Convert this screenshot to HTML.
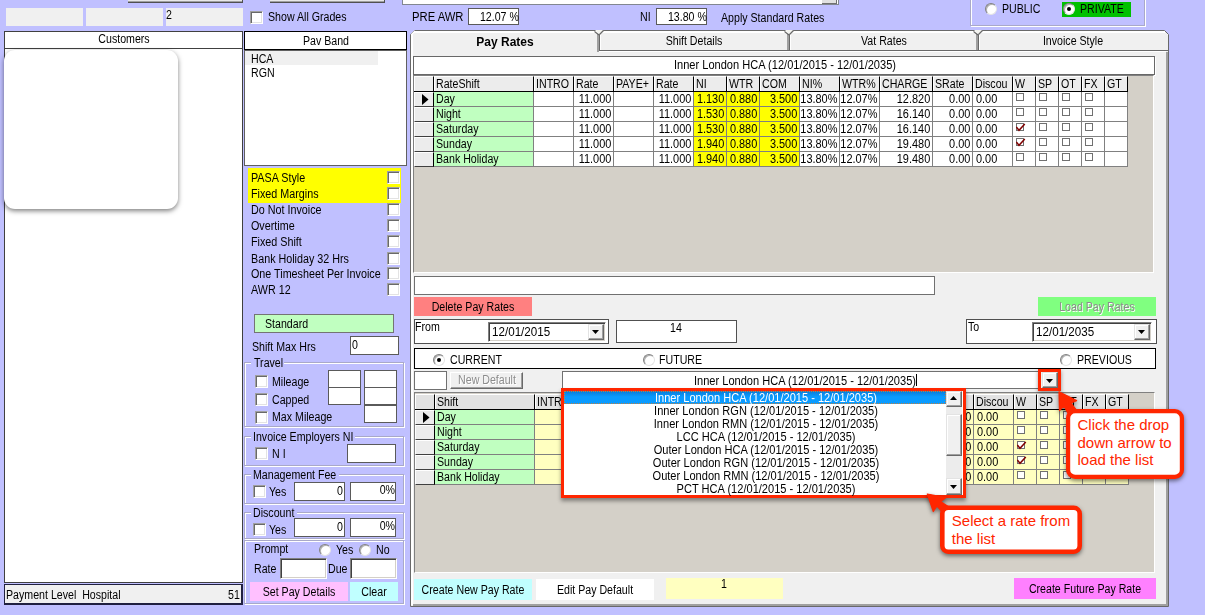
<!DOCTYPE html>
<html><head><meta charset="utf-8"><title>Pay Rates</title><style>
html,body{margin:0;padding:0;}
body{width:1205px;height:615px;overflow:hidden;background:#c0c0ff;position:relative;font-family:"Liberation Sans",sans-serif;font-size:12.5px;color:#000;}
.a{position:absolute;}
.t{white-space:nowrap;line-height:14px;height:14px;transform:scaleX(.85);}
.tl{transform-origin:0 50%;}
.tr{transform-origin:100% 50%;text-align:right;}
.tc{transform-origin:50% 50%;text-align:center;}
.ct{font-size:15px;line-height:18px;color:#ff2600;white-space:nowrap;}
.dis{color:#8c8c8c;text-shadow:1px 1px 0 #fff;}
.cb{width:13px;height:13px;box-sizing:border-box;background:#fff;border:1px solid;border-color:#a0a0a0 #fff #fff #a0a0a0;box-shadow:inset 1px 1px 0 #696969, inset -1px -1px 0 #e3e3e3;}
.gcb{width:8px;height:8px;box-sizing:border-box;background:#fff;border:1px solid #707070;}
.rd{width:12px;height:12px;box-sizing:border-box;border-radius:50%;background:#fff;border:1px solid;border-color:#808080 #e4e4e4 #e4e4e4 #808080;box-shadow:inset 1px 1px 0 #b0b0b0;}
.rd i{position:absolute;left:3px;top:3px;width:4px;height:4px;border-radius:50%;background:#000;}
.tb{background:#fff;box-sizing:border-box;border:1px solid #5a5a5a;}
.sunk{background:#fff;box-sizing:border-box;border:1px solid;border-color:#808080 #fff #fff #808080;box-shadow:inset 1px 1px 0 #404040, inset -1px -1px 0 #d4d0c8;}
.frame{box-sizing:border-box;border:1px solid #a9a9c9;box-shadow:1px 1px 0 #fff, inset 1px 1px 0 #fff;}
.btnbot{background:#e8e8e8;border-bottom:1px solid #505050;border-right:1px solid #505050;box-sizing:border-box;box-shadow:inset 0 -1px 0 #a0a0a0;}
.btn{background:#f0f0f0;box-sizing:border-box;border:1px solid;border-color:#fff #696969 #696969 #fff;box-shadow:inset -1px -1px 0 #a0a0a0;}
.ddb{background:#f0f0f0;box-sizing:border-box;border:1px solid;border-color:#e3e3e3 #696969 #696969 #e3e3e3;box-shadow:inset -1px -1px 0 #a0a0a0, inset 1px 1px 0 #fff;}
.gh{background:#ececec;box-sizing:border-box;border:1px solid;border-color:#fff #000 #404040 #fff;}
.gh2{background:#e2e2e2;}
.gc{box-sizing:border-box;border-right:1px solid #808080;border-bottom:1px solid #808080;}
</style></head><body>
<div class="a btnbot" style="left:128px;top:0px;width:115px;height:3px;"></div>
<div class="a btnbot" style="left:270px;top:0px;width:115px;height:3px;"></div>
<div class="a " style="left:402px;top:0px;width:437px;height:5px;background:#fff;border:1px solid #828790;border-top:0;box-sizing:border-box;"></div>
<div class="a " style="left:822px;top:0px;width:15px;height:4px;background:#e1e1e1;border-right:1px solid #707070;border-bottom:1px solid #707070;box-sizing:border-box;"></div>
<div class="a " style="left:6px;top:8px;width:77px;height:18px;background:#f0f0f0;"></div>
<div class="a " style="left:86px;top:8px;width:77px;height:18px;background:#f0f0f0;"></div>
<div class="a " style="left:166px;top:8px;width:77px;height:18px;background:#f0f0f0;"></div>
<div class="a t tl " style="left:166.2px;top:8.0px;">2</div>
<div class="a cb" style="left:250px;top:11px"></div>
<div class="a t tl " style="left:268.2px;top:10.4px;">Show All Grades</div>
<div class="a t tl " style="left:412.2px;top:10.4px;transform:scaleX(0.9);">PRE AWR</div>
<div class="a tb" style="left:468px;top:8px;width:51px;height:17px;"></div>
<div class="a t tr " style="right:686.5px;top:10.4px;">12.07 %</div>
<div class="a t tl " style="left:640.2px;top:10.4px;">NI</div>
<div class="a tb" style="left:656px;top:8px;width:51px;height:17px;"></div>
<div class="a t tr " style="right:498.5px;top:10.4px;">13.80 %</div>
<div class="a t tl " style="left:721.0px;top:11.4px;">Apply Standard Rates</div>
<div class="a frame" style="left:970px;top:-4px;width:175px;height:30px;"></div>
<div class="a rd" style="left:985px;top:3px"></div>
<div class="a t tl " style="left:1001.7px;top:2.4px;">PUBLIC</div>
<div class="a " style="left:1062px;top:2px;width:69px;height:15px;background:#00c000;"></div>
<div class="a rd" style="left:1063px;top:3px"><i></i></div>
<div class="a t tl " style="left:1079.7px;top:2.4px;">PRIVATE</div>
<div class="a " style="left:4px;top:31px;width:239px;height:18px;background:#fff;border:1px solid #404040;box-sizing:border-box;"></div>
<div class="a t tc " style="left:-76px;width:400px;top:32.4px;">Customers</div>
<div class="a " style="left:4px;top:48px;width:239px;height:535px;background:#fff;border:1px solid #404040;box-sizing:border-box;"></div>
<div class="a " style="left:4px;top:50px;width:174px;height:159px;background:#fff;border-radius:11px;box-shadow:0 2px 5px rgba(0,0,0,.5);"></div>
<div class="a " style="left:4px;top:584px;width:239px;height:21px;background:#f0f0f0;border:1px solid #202040;border-width:1px 2px 2px 1px;box-sizing:border-box;"></div>
<div class="a t tl " style="left:6.2px;top:588.4px;">Payment Level&nbsp; Hospital</div>
<div class="a t tr " style="right:965px;top:588.4px;">51</div>
<div class="a " style="left:244px;top:31px;width:163px;height:19px;background:#fff;border:1px solid #000;box-sizing:border-box;"></div>
<div class="a t tc " style="left:126px;width:400px;top:34.4px;">Pav Band</div>
<div class="a " style="left:244px;top:50px;width:163px;height:116px;background:#fff;border:1px solid #606060;box-sizing:border-box;"></div>
<div class="a " style="left:245px;top:51px;width:133px;height:14px;background:#f0f0f0;"></div>
<div class="a t tl " style="left:251.4px;top:52.4px;">HCA</div>
<div class="a t tl " style="left:251.4px;top:66.4px;">RGN</div>
<div class="a " style="left:248px;top:168px;width:153px;height:35px;background:#ffff00;"></div>
<div class="a t tl " style="left:251.4px;top:171.1px;transform:scaleX(0.86);">PASA Style</div>
<div class="a cb" style="left:387px;top:171px"></div>
<div class="a t tl " style="left:251.4px;top:187.1px;transform:scaleX(0.86);">Fixed Margins</div>
<div class="a cb" style="left:387px;top:187px"></div>
<div class="a t tl " style="left:251.4px;top:203.1px;transform:scaleX(0.86);">Do Not Invoice</div>
<div class="a cb" style="left:387px;top:203px"></div>
<div class="a t tl " style="left:251.4px;top:219.1px;transform:scaleX(0.86);">Overtime</div>
<div class="a cb" style="left:387px;top:219px"></div>
<div class="a t tl " style="left:251.4px;top:235.1px;transform:scaleX(0.86);">Fixed Shift</div>
<div class="a cb" style="left:387px;top:235px"></div>
<div class="a t tl " style="left:251.4px;top:252.1px;transform:scaleX(0.86);">Bank Holiday 32 Hrs</div>
<div class="a cb" style="left:387px;top:252px"></div>
<div class="a t tl " style="left:251.4px;top:267.1px;transform:scaleX(0.86);">One Timesheet Per Invoice</div>
<div class="a cb" style="left:387px;top:267px"></div>
<div class="a t tl " style="left:251.4px;top:283.1px;transform:scaleX(0.86);">AWR 12</div>
<div class="a cb" style="left:387px;top:283px"></div>
<div class="a " style="left:254px;top:314px;width:140px;height:19px;background:#c0ffc0;border:1px solid #747474;box-sizing:border-box;"></div>
<div class="a t tl " style="left:264.7px;top:316.9px;">Standard</div>
<div class="a t tl " style="left:251.7px;top:339.9px;">Shift Max Hrs</div>
<div class="a tb" style="left:350px;top:336px;width:49px;height:19px;"></div>
<div class="a t tl " style="left:352.2px;top:337.9px;">0</div>
<div class="a frame" style="left:244px;top:362px;width:160px;height:65px;"></div>
<div class="a " style="left:251px;top:356px;width:33px;height:12px;background:#c0c0ff;"></div>
<div class="a t tl " style="left:254.0px;top:355.9px;">Travel</div>
<div class="a cb" style="left:255px;top:375px"></div>
<div class="a t tl " style="left:271.7px;top:374.9px;">Mileage</div>
<div class="a cb" style="left:255px;top:393px"></div>
<div class="a t tl " style="left:271.7px;top:392.6px;">Capped</div>
<div class="a cb" style="left:255px;top:411px"></div>
<div class="a t tl " style="left:271.7px;top:410.3px;">Max Mileage</div>
<div class="a tb" style="left:328px;top:370px;width:33px;height:18px;"></div>
<div class="a tb" style="left:328px;top:387px;width:33px;height:18px;"></div>
<div class="a tb" style="left:364px;top:370px;width:33px;height:18px;"></div>
<div class="a tb" style="left:364px;top:387px;width:33px;height:18px;"></div>
<div class="a tb" style="left:364px;top:405px;width:33px;height:18px;"></div>
<div class="a frame" style="left:244px;top:436px;width:160px;height:30px;"></div>
<div class="a " style="left:251px;top:430px;width:104px;height:12px;background:#c0c0ff;"></div>
<div class="a t tl " style="left:253.0px;top:429.9px;">Invoice Employers NI</div>
<div class="a cb" style="left:255px;top:447px"></div>
<div class="a t tl " style="left:271.7px;top:446.9px;">N I</div>
<div class="a tb" style="left:347px;top:444px;width:49px;height:19px;"></div>
<div class="a frame" style="left:244px;top:474px;width:160px;height:30px;"></div>
<div class="a " style="left:251px;top:468px;width:88px;height:12px;background:#c0c0ff;"></div>
<div class="a t tl " style="left:253.0px;top:467.9px;">Management Fee</div>
<div class="a cb" style="left:253px;top:485px"></div>
<div class="a t tl " style="left:269.2px;top:484.9px;">Yes</div>
<div class="a tb" style="left:294px;top:482px;width:51px;height:19px;"></div>
<div class="a t tr " style="right:862px;top:484.4px;">0</div>
<div class="a tb" style="left:350px;top:482px;width:46px;height:19px;"></div>
<div class="a t tr " style="right:810px;top:483.4px;">0%</div>
<div class="a frame" style="left:244px;top:512px;width:160px;height:27px;"></div>
<div class="a " style="left:251px;top:506px;width:46px;height:12px;background:#c0c0ff;"></div>
<div class="a t tl " style="left:253.0px;top:505.9px;">Discount</div>
<div class="a cb" style="left:253px;top:523px"></div>
<div class="a t tl " style="left:269.2px;top:522.9px;">Yes</div>
<div class="a tb" style="left:294px;top:518px;width:51px;height:19px;"></div>
<div class="a t tr " style="right:862px;top:520.4px;">0</div>
<div class="a tb" style="left:350px;top:518px;width:46px;height:19px;"></div>
<div class="a t tr " style="right:810px;top:519.4px;">0%</div>
<div class="a frame" style="left:244px;top:540px;width:160px;height:64px;"></div>
<div class="a t tl " style="left:253.7px;top:542.2px;">Prompt</div>
<div class="a rd" style="left:319px;top:544px"></div>
<div class="a t tl " style="left:335.7px;top:543.2px;">Yes</div>
<div class="a rd" style="left:359px;top:544px"></div>
<div class="a t tl " style="left:375.9px;top:543.2px;">No</div>
<div class="a t tl " style="left:253.7px;top:561.9px;">Rate</div>
<div class="a sunk" style="left:280px;top:558px;width:47px;height:21px;"></div>
<div class="a t tl " style="left:327.7px;top:561.9px;">Due</div>
<div class="a sunk" style="left:350px;top:558px;width:47px;height:21px;"></div>
<div class="a " style="left:250px;top:582px;width:98px;height:19px;background:#ffc0ff;"></div>
<div class="a t tc " style="left:99px;width:400px;top:584.9px;">Set Pay Details</div>
<div class="a " style="left:350px;top:582px;width:48px;height:19px;background:#c0ffff;"></div>
<div class="a t tc " style="left:174px;width:400px;top:584.9px;">Clear</div>
<svg class="a" style="left:0;top:0" width="1205" height="615" shape-rendering="crispEdges"><path d="M410.5 34.5 L414.5 30.5 H1164.5 L1168.5 34.5 V606.5 H410.5 Z" fill="#f0f0f0" stroke="#696969" shape-rendering="auto"/><path d="M414 32 H1165" stroke="#fff" stroke-width="2"/><path d="M412 34 V605" stroke="#fff" stroke-width="2"/><path d="M411.5 34.5 L415 31" stroke="#fff" stroke-width="1.5" shape-rendering="auto"/><path d="M1167 52 V606" stroke="#a0a0a0" stroke-width="2"/><path d="M413 605 H1168" stroke="#a0a0a0" stroke-width="2"/><path d="M598 34 V52" stroke="#a0a0a0" stroke-width="2"/><path d="M599.5 34 V51" stroke="#696969" stroke-width="1"/><path d="M600 52 V34 " stroke="#fff" stroke-width="1"/><path d="M595 30 L599.5 34.5 L603.5 30 Z" fill="#f4f4f0" stroke="none" shape-rendering="auto"/><path d="M594.5 31.5 L599 35 M599.5 34.5 L603.5 30.5" fill="none" stroke="#696969" stroke-width="1.2" shape-rendering="auto"/><path d="M788 34 V52" stroke="#a0a0a0" stroke-width="2"/><path d="M789.5 34 V51" stroke="#696969" stroke-width="1"/><path d="M790 52 V34 " stroke="#fff" stroke-width="1"/><path d="M785 30 L789.5 34.5 L793.5 30 Z" fill="#f4f4f0" stroke="none" shape-rendering="auto"/><path d="M784.5 31.5 L789 35 M789.5 34.5 L793.5 30.5" fill="none" stroke="#696969" stroke-width="1.2" shape-rendering="auto"/><path d="M977 34 V52" stroke="#a0a0a0" stroke-width="2"/><path d="M978.5 34 V51" stroke="#696969" stroke-width="1"/><path d="M979 52 V34 " stroke="#fff" stroke-width="1"/><path d="M974 30 L978.5 34.5 L982.5 30 Z" fill="#f4f4f0" stroke="none" shape-rendering="auto"/><path d="M973.5 31.5 L978 35 M978.5 34.5 L982.5 30.5" fill="none" stroke="#696969" stroke-width="1.2" shape-rendering="auto"/><path d="M599 50.5 H1168" stroke="#696969" stroke-width="1"/><path d="M599 51.5 H1166" stroke="#fff" stroke-width="1"/></svg>
<div class="a t tc " style="left:305.0px;width:400px;top:35.4px;font-weight:bold;transform:scaleX(0.96);">Pay Rates</div>
<div class="a t tc " style="left:494.0px;width:400px;top:34.4px;">Shift Details</div>
<div class="a t tc " style="left:683.5px;width:400px;top:34.4px;">Vat Rates</div>
<div class="a t tc " style="left:873.0px;width:400px;top:34.4px;">Invoice Style</div>
<div class="a " style="left:413px;top:56px;width:742px;height:19px;background:#fff;border:1px solid #686868;box-sizing:border-box;box-shadow:1px 1px 0 #fff;"></div>
<div class="a t tc " style="left:584.5px;width:400px;top:58.4px;transform:scaleX(0.885);">Inner London HCA (12/01/2015 - 12/01/2035)</div>
<div class="a " style="left:413px;top:75px;width:741px;height:198px;background:#d4d0c8;border:1px solid #808080;border-right-color:#fff;border-bottom-color:#fff;box-sizing:border-box;"></div>
<div class="a gh" style="left:414px;top:76px;width:20px;height:16px;"></div>
<div class="a gh" style="left:434px;top:76px;width:100px;height:16px;"></div>
<div class="a t tl " style="left:435.9px;top:77.1px;">RateShift</div>
<div class="a gh" style="left:534px;top:76px;width:40px;height:16px;"></div>
<div class="a t tl " style="left:535.9px;top:77.1px;">INTRO</div>
<div class="a gh" style="left:574px;top:76px;width:40px;height:16px;"></div>
<div class="a t tl " style="left:575.9px;top:77.1px;">Rate</div>
<div class="a gh" style="left:614px;top:76px;width:40px;height:16px;"></div>
<div class="a t tl " style="left:615.9px;top:77.1px;">PAYE+</div>
<div class="a gh" style="left:654px;top:76px;width:40px;height:16px;"></div>
<div class="a t tl " style="left:655.9px;top:77.1px;">Rate</div>
<div class="a gh" style="left:694px;top:76px;width:33px;height:16px;"></div>
<div class="a t tl " style="left:695.9px;top:77.1px;">NI</div>
<div class="a gh" style="left:727px;top:76px;width:33px;height:16px;"></div>
<div class="a t tl " style="left:728.9px;top:77.1px;">WTR</div>
<div class="a gh" style="left:760px;top:76px;width:40px;height:16px;"></div>
<div class="a t tl " style="left:761.9px;top:77.1px;">COM</div>
<div class="a gh" style="left:800px;top:76px;width:40px;height:16px;"></div>
<div class="a t tl " style="left:801.9px;top:77.1px;">NI%</div>
<div class="a gh" style="left:840px;top:76px;width:40px;height:16px;"></div>
<div class="a t tl " style="left:841.9px;top:77.1px;">WTR%</div>
<div class="a gh" style="left:880px;top:76px;width:53px;height:16px;"></div>
<div class="a t tl " style="left:881.9px;top:77.1px;">CHARGE</div>
<div class="a gh" style="left:933px;top:76px;width:40px;height:16px;"></div>
<div class="a t tl " style="left:934.9px;top:77.1px;">SRate</div>
<div class="a gh" style="left:973px;top:76px;width:40px;height:16px;"></div>
<div class="a t tl " style="left:974.9px;top:77.1px;">Discou</div>
<div class="a gh" style="left:1013px;top:76px;width:23px;height:16px;"></div>
<div class="a t tl " style="left:1014.9px;top:77.1px;">W</div>
<div class="a gh" style="left:1036px;top:76px;width:23px;height:16px;"></div>
<div class="a t tl " style="left:1037.9px;top:77.1px;">SP</div>
<div class="a gh" style="left:1059px;top:76px;width:23px;height:16px;"></div>
<div class="a t tl " style="left:1060.9px;top:77.1px;">OT</div>
<div class="a gh" style="left:1082px;top:76px;width:23px;height:16px;"></div>
<div class="a t tl " style="left:1083.9px;top:77.1px;">FX</div>
<div class="a gh" style="left:1105px;top:76px;width:23px;height:16px;"></div>
<div class="a t tl " style="left:1106.9px;top:77.1px;">GT</div>
<div class="a " style="left:414px;top:91px;width:714px;height:1px;background:#000;"></div>
<div class="a gh" style="left:414px;top:92px;width:20px;height:15px;"></div>
<svg class="a" style="left:422px;top:94px" width="8" height="11"><path d="M0 0 L6.5 5.5 L0 11 Z" fill="#000"/></svg>
<div class="a gc" style="left:434px;top:92px;width:100px;height:15px;background:#c0ffc0;"></div>
<div class="a gc" style="left:534px;top:92px;width:40px;height:15px;background:#fff;"></div>
<div class="a gc" style="left:574px;top:92px;width:40px;height:15px;background:#fff;"></div>
<div class="a gc" style="left:614px;top:92px;width:40px;height:15px;background:#fff;"></div>
<div class="a gc" style="left:654px;top:92px;width:40px;height:15px;background:#fff;"></div>
<div class="a gc" style="left:694px;top:92px;width:33px;height:15px;background:#ffff00;"></div>
<div class="a gc" style="left:727px;top:92px;width:33px;height:15px;background:#ffff00;"></div>
<div class="a gc" style="left:760px;top:92px;width:40px;height:15px;background:#ffff00;"></div>
<div class="a gc" style="left:800px;top:92px;width:40px;height:15px;background:#fff;"></div>
<div class="a gc" style="left:840px;top:92px;width:40px;height:15px;background:#fff;"></div>
<div class="a gc" style="left:880px;top:92px;width:53px;height:15px;background:#fff;"></div>
<div class="a gc" style="left:933px;top:92px;width:40px;height:15px;background:#fff;"></div>
<div class="a gc" style="left:973px;top:92px;width:40px;height:15px;background:#fff;"></div>
<div class="a gc" style="left:1013px;top:92px;width:23px;height:15px;background:#fff;"></div>
<div class="a gc" style="left:1036px;top:92px;width:23px;height:15px;background:#fff;"></div>
<div class="a gc" style="left:1059px;top:92px;width:23px;height:15px;background:#fff;"></div>
<div class="a gc" style="left:1082px;top:92px;width:23px;height:15px;background:#fff;"></div>
<div class="a gc" style="left:1105px;top:92px;width:23px;height:15px;background:#fff;"></div>
<div class="a t tl " style="left:435.9px;top:91.6px;">Day</div>
<div class="a t tr " style="right:594px;top:91.6px;transform:scaleX(0.875);">11.000</div>
<div class="a t tr " style="right:514px;top:91.6px;transform:scaleX(0.875);">11.000</div>
<div class="a t tr " style="right:481px;top:91.6px;transform:scaleX(0.875);">1.130</div>
<div class="a t tr " style="right:448px;top:91.6px;transform:scaleX(0.875);">0.880</div>
<div class="a t tr " style="right:408px;top:91.6px;transform:scaleX(0.875);">3.500</div>
<div class="a t tr " style="right:368px;top:91.6px;transform:scaleX(0.875);">13.80%</div>
<div class="a t tr " style="right:328px;top:91.6px;transform:scaleX(0.875);">12.07%</div>
<div class="a t tr " style="right:275px;top:91.6px;transform:scaleX(0.875);">12.820</div>
<div class="a t tr " style="right:235px;top:91.6px;transform:scaleX(0.875);">0.00</div>
<div class="a t tl " style="left:976.2px;top:91.6px;transform:scaleX(0.875);">0.00</div>
<div class="a gcb" style="left:1016px;top:93px"></div>
<div class="a gcb" style="left:1039px;top:93px"></div>
<div class="a gcb" style="left:1062px;top:93px"></div>
<div class="a gcb" style="left:1085px;top:93px"></div>
<div class="a gh" style="left:414px;top:107px;width:20px;height:15px;"></div>
<div class="a gc" style="left:434px;top:107px;width:100px;height:15px;background:#c0ffc0;"></div>
<div class="a gc" style="left:534px;top:107px;width:40px;height:15px;background:#fff;"></div>
<div class="a gc" style="left:574px;top:107px;width:40px;height:15px;background:#fff;"></div>
<div class="a gc" style="left:614px;top:107px;width:40px;height:15px;background:#fff;"></div>
<div class="a gc" style="left:654px;top:107px;width:40px;height:15px;background:#fff;"></div>
<div class="a gc" style="left:694px;top:107px;width:33px;height:15px;background:#ffff00;"></div>
<div class="a gc" style="left:727px;top:107px;width:33px;height:15px;background:#ffff00;"></div>
<div class="a gc" style="left:760px;top:107px;width:40px;height:15px;background:#ffff00;"></div>
<div class="a gc" style="left:800px;top:107px;width:40px;height:15px;background:#fff;"></div>
<div class="a gc" style="left:840px;top:107px;width:40px;height:15px;background:#fff;"></div>
<div class="a gc" style="left:880px;top:107px;width:53px;height:15px;background:#fff;"></div>
<div class="a gc" style="left:933px;top:107px;width:40px;height:15px;background:#fff;"></div>
<div class="a gc" style="left:973px;top:107px;width:40px;height:15px;background:#fff;"></div>
<div class="a gc" style="left:1013px;top:107px;width:23px;height:15px;background:#fff;"></div>
<div class="a gc" style="left:1036px;top:107px;width:23px;height:15px;background:#fff;"></div>
<div class="a gc" style="left:1059px;top:107px;width:23px;height:15px;background:#fff;"></div>
<div class="a gc" style="left:1082px;top:107px;width:23px;height:15px;background:#fff;"></div>
<div class="a gc" style="left:1105px;top:107px;width:23px;height:15px;background:#fff;"></div>
<div class="a t tl " style="left:435.9px;top:106.6px;">Night</div>
<div class="a t tr " style="right:594px;top:106.6px;transform:scaleX(0.875);">11.000</div>
<div class="a t tr " style="right:514px;top:106.6px;transform:scaleX(0.875);">11.000</div>
<div class="a t tr " style="right:481px;top:106.6px;transform:scaleX(0.875);">1.530</div>
<div class="a t tr " style="right:448px;top:106.6px;transform:scaleX(0.875);">0.880</div>
<div class="a t tr " style="right:408px;top:106.6px;transform:scaleX(0.875);">3.500</div>
<div class="a t tr " style="right:368px;top:106.6px;transform:scaleX(0.875);">13.80%</div>
<div class="a t tr " style="right:328px;top:106.6px;transform:scaleX(0.875);">12.07%</div>
<div class="a t tr " style="right:275px;top:106.6px;transform:scaleX(0.875);">16.140</div>
<div class="a t tr " style="right:235px;top:106.6px;transform:scaleX(0.875);">0.00</div>
<div class="a t tl " style="left:976.2px;top:106.6px;transform:scaleX(0.875);">0.00</div>
<div class="a gcb" style="left:1016px;top:108px"></div>
<div class="a gcb" style="left:1039px;top:108px"></div>
<div class="a gcb" style="left:1062px;top:108px"></div>
<div class="a gcb" style="left:1085px;top:108px"></div>
<div class="a gh" style="left:414px;top:122px;width:20px;height:15px;"></div>
<div class="a gc" style="left:434px;top:122px;width:100px;height:15px;background:#c0ffc0;"></div>
<div class="a gc" style="left:534px;top:122px;width:40px;height:15px;background:#fff;"></div>
<div class="a gc" style="left:574px;top:122px;width:40px;height:15px;background:#fff;"></div>
<div class="a gc" style="left:614px;top:122px;width:40px;height:15px;background:#fff;"></div>
<div class="a gc" style="left:654px;top:122px;width:40px;height:15px;background:#fff;"></div>
<div class="a gc" style="left:694px;top:122px;width:33px;height:15px;background:#ffff00;"></div>
<div class="a gc" style="left:727px;top:122px;width:33px;height:15px;background:#ffff00;"></div>
<div class="a gc" style="left:760px;top:122px;width:40px;height:15px;background:#ffff00;"></div>
<div class="a gc" style="left:800px;top:122px;width:40px;height:15px;background:#fff;"></div>
<div class="a gc" style="left:840px;top:122px;width:40px;height:15px;background:#fff;"></div>
<div class="a gc" style="left:880px;top:122px;width:53px;height:15px;background:#fff;"></div>
<div class="a gc" style="left:933px;top:122px;width:40px;height:15px;background:#fff;"></div>
<div class="a gc" style="left:973px;top:122px;width:40px;height:15px;background:#fff;"></div>
<div class="a gc" style="left:1013px;top:122px;width:23px;height:15px;background:#fff;"></div>
<div class="a gc" style="left:1036px;top:122px;width:23px;height:15px;background:#fff;"></div>
<div class="a gc" style="left:1059px;top:122px;width:23px;height:15px;background:#fff;"></div>
<div class="a gc" style="left:1082px;top:122px;width:23px;height:15px;background:#fff;"></div>
<div class="a gc" style="left:1105px;top:122px;width:23px;height:15px;background:#fff;"></div>
<div class="a t tl " style="left:435.9px;top:121.6px;">Saturday</div>
<div class="a t tr " style="right:594px;top:121.6px;transform:scaleX(0.875);">11.000</div>
<div class="a t tr " style="right:514px;top:121.6px;transform:scaleX(0.875);">11.000</div>
<div class="a t tr " style="right:481px;top:121.6px;transform:scaleX(0.875);">1.530</div>
<div class="a t tr " style="right:448px;top:121.6px;transform:scaleX(0.875);">0.880</div>
<div class="a t tr " style="right:408px;top:121.6px;transform:scaleX(0.875);">3.500</div>
<div class="a t tr " style="right:368px;top:121.6px;transform:scaleX(0.875);">13.80%</div>
<div class="a t tr " style="right:328px;top:121.6px;transform:scaleX(0.875);">12.07%</div>
<div class="a t tr " style="right:275px;top:121.6px;transform:scaleX(0.875);">16.140</div>
<div class="a t tr " style="right:235px;top:121.6px;transform:scaleX(0.875);">0.00</div>
<div class="a t tl " style="left:976.2px;top:121.6px;transform:scaleX(0.875);">0.00</div>
<div class="a gcb" style="left:1016px;top:123px"></div>
<svg class="a" style="left:1016px;top:122px" width="10" height="10"><path d="M0.3 5 L3 8.3 L8.8 2" fill="none" stroke="#800000" stroke-width="1.5"/></svg>
<div class="a gcb" style="left:1039px;top:123px"></div>
<div class="a gcb" style="left:1062px;top:123px"></div>
<div class="a gcb" style="left:1085px;top:123px"></div>
<div class="a gh" style="left:414px;top:137px;width:20px;height:15px;"></div>
<div class="a gc" style="left:434px;top:137px;width:100px;height:15px;background:#c0ffc0;"></div>
<div class="a gc" style="left:534px;top:137px;width:40px;height:15px;background:#fff;"></div>
<div class="a gc" style="left:574px;top:137px;width:40px;height:15px;background:#fff;"></div>
<div class="a gc" style="left:614px;top:137px;width:40px;height:15px;background:#fff;"></div>
<div class="a gc" style="left:654px;top:137px;width:40px;height:15px;background:#fff;"></div>
<div class="a gc" style="left:694px;top:137px;width:33px;height:15px;background:#ffff00;"></div>
<div class="a gc" style="left:727px;top:137px;width:33px;height:15px;background:#ffff00;"></div>
<div class="a gc" style="left:760px;top:137px;width:40px;height:15px;background:#ffff00;"></div>
<div class="a gc" style="left:800px;top:137px;width:40px;height:15px;background:#fff;"></div>
<div class="a gc" style="left:840px;top:137px;width:40px;height:15px;background:#fff;"></div>
<div class="a gc" style="left:880px;top:137px;width:53px;height:15px;background:#fff;"></div>
<div class="a gc" style="left:933px;top:137px;width:40px;height:15px;background:#fff;"></div>
<div class="a gc" style="left:973px;top:137px;width:40px;height:15px;background:#fff;"></div>
<div class="a gc" style="left:1013px;top:137px;width:23px;height:15px;background:#fff;"></div>
<div class="a gc" style="left:1036px;top:137px;width:23px;height:15px;background:#fff;"></div>
<div class="a gc" style="left:1059px;top:137px;width:23px;height:15px;background:#fff;"></div>
<div class="a gc" style="left:1082px;top:137px;width:23px;height:15px;background:#fff;"></div>
<div class="a gc" style="left:1105px;top:137px;width:23px;height:15px;background:#fff;"></div>
<div class="a t tl " style="left:435.9px;top:136.6px;">Sunday</div>
<div class="a t tr " style="right:594px;top:136.6px;transform:scaleX(0.875);">11.000</div>
<div class="a t tr " style="right:514px;top:136.6px;transform:scaleX(0.875);">11.000</div>
<div class="a t tr " style="right:481px;top:136.6px;transform:scaleX(0.875);">1.940</div>
<div class="a t tr " style="right:448px;top:136.6px;transform:scaleX(0.875);">0.880</div>
<div class="a t tr " style="right:408px;top:136.6px;transform:scaleX(0.875);">3.500</div>
<div class="a t tr " style="right:368px;top:136.6px;transform:scaleX(0.875);">13.80%</div>
<div class="a t tr " style="right:328px;top:136.6px;transform:scaleX(0.875);">12.07%</div>
<div class="a t tr " style="right:275px;top:136.6px;transform:scaleX(0.875);">19.480</div>
<div class="a t tr " style="right:235px;top:136.6px;transform:scaleX(0.875);">0.00</div>
<div class="a t tl " style="left:976.2px;top:136.6px;transform:scaleX(0.875);">0.00</div>
<div class="a gcb" style="left:1016px;top:138px"></div>
<svg class="a" style="left:1016px;top:137px" width="10" height="10"><path d="M0.3 5 L3 8.3 L8.8 2" fill="none" stroke="#800000" stroke-width="1.5"/></svg>
<div class="a gcb" style="left:1039px;top:138px"></div>
<div class="a gcb" style="left:1062px;top:138px"></div>
<div class="a gcb" style="left:1085px;top:138px"></div>
<div class="a gh" style="left:414px;top:152px;width:20px;height:15px;"></div>
<div class="a gc" style="left:434px;top:152px;width:100px;height:15px;background:#c0ffc0;"></div>
<div class="a gc" style="left:534px;top:152px;width:40px;height:15px;background:#fff;"></div>
<div class="a gc" style="left:574px;top:152px;width:40px;height:15px;background:#fff;"></div>
<div class="a gc" style="left:614px;top:152px;width:40px;height:15px;background:#fff;"></div>
<div class="a gc" style="left:654px;top:152px;width:40px;height:15px;background:#fff;"></div>
<div class="a gc" style="left:694px;top:152px;width:33px;height:15px;background:#ffff00;"></div>
<div class="a gc" style="left:727px;top:152px;width:33px;height:15px;background:#ffff00;"></div>
<div class="a gc" style="left:760px;top:152px;width:40px;height:15px;background:#ffff00;"></div>
<div class="a gc" style="left:800px;top:152px;width:40px;height:15px;background:#fff;"></div>
<div class="a gc" style="left:840px;top:152px;width:40px;height:15px;background:#fff;"></div>
<div class="a gc" style="left:880px;top:152px;width:53px;height:15px;background:#fff;"></div>
<div class="a gc" style="left:933px;top:152px;width:40px;height:15px;background:#fff;"></div>
<div class="a gc" style="left:973px;top:152px;width:40px;height:15px;background:#fff;"></div>
<div class="a gc" style="left:1013px;top:152px;width:23px;height:15px;background:#fff;"></div>
<div class="a gc" style="left:1036px;top:152px;width:23px;height:15px;background:#fff;"></div>
<div class="a gc" style="left:1059px;top:152px;width:23px;height:15px;background:#fff;"></div>
<div class="a gc" style="left:1082px;top:152px;width:23px;height:15px;background:#fff;"></div>
<div class="a gc" style="left:1105px;top:152px;width:23px;height:15px;background:#fff;"></div>
<div class="a t tl " style="left:435.9px;top:151.6px;">Bank Holiday</div>
<div class="a t tr " style="right:594px;top:151.6px;transform:scaleX(0.875);">11.000</div>
<div class="a t tr " style="right:514px;top:151.6px;transform:scaleX(0.875);">11.000</div>
<div class="a t tr " style="right:481px;top:151.6px;transform:scaleX(0.875);">1.940</div>
<div class="a t tr " style="right:448px;top:151.6px;transform:scaleX(0.875);">0.880</div>
<div class="a t tr " style="right:408px;top:151.6px;transform:scaleX(0.875);">3.500</div>
<div class="a t tr " style="right:368px;top:151.6px;transform:scaleX(0.875);">13.80%</div>
<div class="a t tr " style="right:328px;top:151.6px;transform:scaleX(0.875);">12.07%</div>
<div class="a t tr " style="right:275px;top:151.6px;transform:scaleX(0.875);">19.480</div>
<div class="a t tr " style="right:235px;top:151.6px;transform:scaleX(0.875);">0.00</div>
<div class="a t tl " style="left:976.2px;top:151.6px;transform:scaleX(0.875);">0.00</div>
<div class="a gcb" style="left:1016px;top:153px"></div>
<div class="a gcb" style="left:1039px;top:153px"></div>
<div class="a gcb" style="left:1062px;top:153px"></div>
<div class="a gcb" style="left:1085px;top:153px"></div>
<div class="a " style="left:414px;top:276px;width:521px;height:19px;background:#fff;border:1px solid #707070;box-sizing:border-box;"></div>
<div class="a " style="left:414px;top:297px;width:118px;height:19px;background:#ff8080;"></div>
<div class="a t tc " style="left:273px;width:400px;top:300.4px;">Delete Pay Rates</div>
<div class="a " style="left:1038px;top:297px;width:118px;height:19px;background:#80ff80;"></div>
<div class="a t tc dis" style="left:897px;width:400px;top:300.4px;">Load Pay Rates</div>
<div class="a " style="left:414px;top:319px;width:195px;height:25px;background:#fff;border:1px solid #505050;box-sizing:border-box;"></div>
<div class="a t tl " style="left:415.2px;top:320.4px;">From</div>
<div class="a sunk" style="left:488px;top:322px;width:118px;height:20px;"></div>
<div class="a t tl " style="left:492.2px;top:324.9px;transform:scaleX(0.93);">12/01/2015</div>
<div class="a ddb" style="left:588px;top:324px;width:16px;height:16px;"></div>
<svg class="a" style="left:592px;top:330px" width="8" height="5"><path d="M0 0 H7 L3.5 4 Z" fill="#000"/></svg>
<div class="a " style="left:616px;top:320px;width:121px;height:23px;background:#fff;border:1px solid #505050;box-sizing:border-box;"></div>
<div class="a t tc " style="left:476px;width:400px;top:321.4px;">14</div>
<div class="a " style="left:966px;top:319px;width:191px;height:25px;background:#fff;border:1px solid #505050;box-sizing:border-box;"></div>
<div class="a t tl " style="left:968.2px;top:320.4px;">To</div>
<div class="a sunk" style="left:1032px;top:322px;width:120px;height:20px;"></div>
<div class="a t tl " style="left:1036.2px;top:324.9px;transform:scaleX(0.93);">12/01/2035</div>
<div class="a ddb" style="left:1134px;top:324px;width:16px;height:16px;"></div>
<svg class="a" style="left:1138px;top:330px" width="8" height="5"><path d="M0 0 H7 L3.5 4 Z" fill="#000"/></svg>
<div class="a " style="left:414px;top:348px;width:742px;height:21px;background:#fff;border:1px solid #000;box-sizing:border-box;"></div>
<div class="a rd" style="left:433px;top:354px"><i></i></div>
<div class="a t tl " style="left:449.7px;top:353.4px;">CURRENT</div>
<div class="a rd" style="left:642.5px;top:354px"></div>
<div class="a t tl " style="left:659.2px;top:353.4px;">FUTURE</div>
<div class="a rd" style="left:1060px;top:354px"></div>
<div class="a t tl " style="left:1077.2px;top:353.4px;">PREVIOUS</div>
<div class="a " style="left:414px;top:371px;width:33px;height:19px;background:#fff;border:1px solid #707070;box-sizing:border-box;"></div>
<div class="a btn" style="left:450px;top:372px;width:73px;height:17px;"></div>
<div class="a t tc dis" style="left:286.5px;width:400px;top:373.4px;">New Default</div>
<div class="a " style="left:562px;top:371px;width:477px;height:18px;background:#fff;border:1px solid #707070;box-sizing:border-box;"></div>
<div class="a t tc " style="left:605px;width:400px;top:374.0px;transform:scaleX(0.885);">Inner London HCA (12/01/2015 - 12/01/2035)</div>
<div class="a " style="left:916px;top:374px;width:1px;height:12px;background:#000;"></div>
<div class="a " style="left:414px;top:392px;width:741px;height:181px;background:#d4d0c8;border:1px solid #808080;border-right-color:#fff;border-bottom-color:#fff;box-sizing:border-box;"></div>
<div class="a gh gh2" style="left:415px;top:394px;width:20px;height:16px;"></div>
<div class="a gh gh2" style="left:435px;top:394px;width:100px;height:16px;"></div>
<div class="a t tl " style="left:436.9px;top:395.1px;">Shift</div>
<div class="a gh gh2" style="left:535px;top:394px;width:40px;height:16px;"></div>
<div class="a t tl " style="left:536.9px;top:395.1px;">INTRO</div>
<div class="a gh gh2" style="left:575px;top:394px;width:40px;height:16px;"></div>
<div class="a t tl " style="left:576.9px;top:395.1px;">Rate</div>
<div class="a gh gh2" style="left:615px;top:394px;width:40px;height:16px;"></div>
<div class="a t tl " style="left:616.9px;top:395.1px;">PAYE+</div>
<div class="a gh gh2" style="left:655px;top:394px;width:40px;height:16px;"></div>
<div class="a t tl " style="left:656.9px;top:395.1px;">Rate</div>
<div class="a gh gh2" style="left:695px;top:394px;width:33px;height:16px;"></div>
<div class="a t tl " style="left:696.9px;top:395.1px;">NI</div>
<div class="a gh gh2" style="left:728px;top:394px;width:33px;height:16px;"></div>
<div class="a t tl " style="left:729.9px;top:395.1px;">WTR</div>
<div class="a gh gh2" style="left:761px;top:394px;width:40px;height:16px;"></div>
<div class="a t tl " style="left:762.9px;top:395.1px;">COM</div>
<div class="a gh gh2" style="left:801px;top:394px;width:40px;height:16px;"></div>
<div class="a t tl " style="left:802.9px;top:395.1px;">NI%</div>
<div class="a gh gh2" style="left:841px;top:394px;width:40px;height:16px;"></div>
<div class="a t tl " style="left:842.9px;top:395.1px;">WTR%</div>
<div class="a gh gh2" style="left:881px;top:394px;width:53px;height:16px;"></div>
<div class="a t tl " style="left:882.9px;top:395.1px;">CHARGE</div>
<div class="a gh gh2" style="left:934px;top:394px;width:40px;height:16px;"></div>
<div class="a t tl " style="left:935.9px;top:395.1px;">SRate</div>
<div class="a gh gh2" style="left:974px;top:394px;width:40px;height:16px;"></div>
<div class="a t tl " style="left:975.9px;top:395.1px;">Discou</div>
<div class="a gh gh2" style="left:1014px;top:394px;width:23px;height:16px;"></div>
<div class="a t tl " style="left:1015.9px;top:395.1px;">W</div>
<div class="a gh gh2" style="left:1037px;top:394px;width:23px;height:16px;"></div>
<div class="a t tl " style="left:1038.9px;top:395.1px;">SP</div>
<div class="a gh gh2" style="left:1060px;top:394px;width:23px;height:16px;"></div>
<div class="a t tl " style="left:1061.9px;top:395.1px;">OT</div>
<div class="a gh gh2" style="left:1083px;top:394px;width:23px;height:16px;"></div>
<div class="a t tl " style="left:1084.9px;top:395.1px;">FX</div>
<div class="a gh gh2" style="left:1106px;top:394px;width:23px;height:16px;"></div>
<div class="a t tl " style="left:1107.9px;top:395.1px;">GT</div>
<div class="a " style="left:415px;top:409px;width:714px;height:1px;background:#000;"></div>
<div class="a gh" style="left:415px;top:410px;width:20px;height:15px;"></div>
<svg class="a" style="left:423px;top:412px" width="8" height="11"><path d="M0 0 L6.5 5.5 L0 11 Z" fill="#000"/></svg>
<div class="a gc" style="left:435px;top:410px;width:100px;height:15px;background:#c0ffc0;"></div>
<div class="a gc" style="left:535px;top:410px;width:40px;height:15px;background:#ffffc0;"></div>
<div class="a gc" style="left:575px;top:410px;width:40px;height:15px;background:#ffffc0;"></div>
<div class="a gc" style="left:615px;top:410px;width:40px;height:15px;background:#ffffc0;"></div>
<div class="a gc" style="left:655px;top:410px;width:40px;height:15px;background:#ffffc0;"></div>
<div class="a gc" style="left:695px;top:410px;width:33px;height:15px;background:#ffffc0;"></div>
<div class="a gc" style="left:728px;top:410px;width:33px;height:15px;background:#ffffc0;"></div>
<div class="a gc" style="left:761px;top:410px;width:40px;height:15px;background:#ffffc0;"></div>
<div class="a gc" style="left:801px;top:410px;width:40px;height:15px;background:#ffffc0;"></div>
<div class="a gc" style="left:841px;top:410px;width:40px;height:15px;background:#ffffc0;"></div>
<div class="a gc" style="left:881px;top:410px;width:53px;height:15px;background:#ffffc0;"></div>
<div class="a gc" style="left:934px;top:410px;width:40px;height:15px;background:#ffffc0;"></div>
<div class="a gc" style="left:974px;top:410px;width:40px;height:15px;background:#ffffc0;"></div>
<div class="a gc" style="left:1014px;top:410px;width:23px;height:15px;background:#ffffc0;"></div>
<div class="a gc" style="left:1037px;top:410px;width:23px;height:15px;background:#ffffc0;"></div>
<div class="a gc" style="left:1060px;top:410px;width:23px;height:15px;background:#ffffc0;"></div>
<div class="a gc" style="left:1083px;top:410px;width:23px;height:15px;background:#ffffc0;"></div>
<div class="a gc" style="left:1106px;top:410px;width:23px;height:15px;background:#ffffc0;"></div>
<div class="a t tl " style="left:436.9px;top:409.6px;">Day</div>
<div class="a t tr " style="right:234px;top:409.6px;transform:scaleX(0.875);">0.00</div>
<div class="a t tl " style="left:977.2px;top:409.6px;transform:scaleX(0.875);">0.00</div>
<div class="a gcb" style="left:1017px;top:411px"></div>
<div class="a gcb" style="left:1040px;top:411px"></div>
<div class="a gcb" style="left:1063px;top:411px"></div>
<div class="a gcb" style="left:1086px;top:411px"></div>
<div class="a gh" style="left:415px;top:425px;width:20px;height:15px;"></div>
<div class="a gc" style="left:435px;top:425px;width:100px;height:15px;background:#c0ffc0;"></div>
<div class="a gc" style="left:535px;top:425px;width:40px;height:15px;background:#ffffc0;"></div>
<div class="a gc" style="left:575px;top:425px;width:40px;height:15px;background:#ffffc0;"></div>
<div class="a gc" style="left:615px;top:425px;width:40px;height:15px;background:#ffffc0;"></div>
<div class="a gc" style="left:655px;top:425px;width:40px;height:15px;background:#ffffc0;"></div>
<div class="a gc" style="left:695px;top:425px;width:33px;height:15px;background:#ffffc0;"></div>
<div class="a gc" style="left:728px;top:425px;width:33px;height:15px;background:#ffffc0;"></div>
<div class="a gc" style="left:761px;top:425px;width:40px;height:15px;background:#ffffc0;"></div>
<div class="a gc" style="left:801px;top:425px;width:40px;height:15px;background:#ffffc0;"></div>
<div class="a gc" style="left:841px;top:425px;width:40px;height:15px;background:#ffffc0;"></div>
<div class="a gc" style="left:881px;top:425px;width:53px;height:15px;background:#ffffc0;"></div>
<div class="a gc" style="left:934px;top:425px;width:40px;height:15px;background:#ffffc0;"></div>
<div class="a gc" style="left:974px;top:425px;width:40px;height:15px;background:#ffffc0;"></div>
<div class="a gc" style="left:1014px;top:425px;width:23px;height:15px;background:#ffffc0;"></div>
<div class="a gc" style="left:1037px;top:425px;width:23px;height:15px;background:#ffffc0;"></div>
<div class="a gc" style="left:1060px;top:425px;width:23px;height:15px;background:#ffffc0;"></div>
<div class="a gc" style="left:1083px;top:425px;width:23px;height:15px;background:#ffffc0;"></div>
<div class="a gc" style="left:1106px;top:425px;width:23px;height:15px;background:#ffffc0;"></div>
<div class="a t tl " style="left:436.9px;top:424.6px;">Night</div>
<div class="a t tr " style="right:234px;top:424.6px;transform:scaleX(0.875);">0.00</div>
<div class="a t tl " style="left:977.2px;top:424.6px;transform:scaleX(0.875);">0.00</div>
<div class="a gcb" style="left:1017px;top:426px"></div>
<div class="a gcb" style="left:1040px;top:426px"></div>
<div class="a gcb" style="left:1063px;top:426px"></div>
<div class="a gcb" style="left:1086px;top:426px"></div>
<div class="a gh" style="left:415px;top:440px;width:20px;height:15px;"></div>
<div class="a gc" style="left:435px;top:440px;width:100px;height:15px;background:#c0ffc0;"></div>
<div class="a gc" style="left:535px;top:440px;width:40px;height:15px;background:#ffffc0;"></div>
<div class="a gc" style="left:575px;top:440px;width:40px;height:15px;background:#ffffc0;"></div>
<div class="a gc" style="left:615px;top:440px;width:40px;height:15px;background:#ffffc0;"></div>
<div class="a gc" style="left:655px;top:440px;width:40px;height:15px;background:#ffffc0;"></div>
<div class="a gc" style="left:695px;top:440px;width:33px;height:15px;background:#ffffc0;"></div>
<div class="a gc" style="left:728px;top:440px;width:33px;height:15px;background:#ffffc0;"></div>
<div class="a gc" style="left:761px;top:440px;width:40px;height:15px;background:#ffffc0;"></div>
<div class="a gc" style="left:801px;top:440px;width:40px;height:15px;background:#ffffc0;"></div>
<div class="a gc" style="left:841px;top:440px;width:40px;height:15px;background:#ffffc0;"></div>
<div class="a gc" style="left:881px;top:440px;width:53px;height:15px;background:#ffffc0;"></div>
<div class="a gc" style="left:934px;top:440px;width:40px;height:15px;background:#ffffc0;"></div>
<div class="a gc" style="left:974px;top:440px;width:40px;height:15px;background:#ffffc0;"></div>
<div class="a gc" style="left:1014px;top:440px;width:23px;height:15px;background:#ffffc0;"></div>
<div class="a gc" style="left:1037px;top:440px;width:23px;height:15px;background:#ffffc0;"></div>
<div class="a gc" style="left:1060px;top:440px;width:23px;height:15px;background:#ffffc0;"></div>
<div class="a gc" style="left:1083px;top:440px;width:23px;height:15px;background:#ffffc0;"></div>
<div class="a gc" style="left:1106px;top:440px;width:23px;height:15px;background:#ffffc0;"></div>
<div class="a t tl " style="left:436.9px;top:439.6px;">Saturday</div>
<div class="a t tr " style="right:234px;top:439.6px;transform:scaleX(0.875);">0.00</div>
<div class="a t tl " style="left:977.2px;top:439.6px;transform:scaleX(0.875);">0.00</div>
<div class="a gcb" style="left:1017px;top:441px"></div>
<svg class="a" style="left:1017px;top:440px" width="10" height="10"><path d="M0.3 5 L3 8.3 L8.8 2" fill="none" stroke="#800000" stroke-width="1.5"/></svg>
<div class="a gcb" style="left:1040px;top:441px"></div>
<div class="a gcb" style="left:1063px;top:441px"></div>
<div class="a gcb" style="left:1086px;top:441px"></div>
<div class="a gh" style="left:415px;top:455px;width:20px;height:15px;"></div>
<div class="a gc" style="left:435px;top:455px;width:100px;height:15px;background:#c0ffc0;"></div>
<div class="a gc" style="left:535px;top:455px;width:40px;height:15px;background:#ffffc0;"></div>
<div class="a gc" style="left:575px;top:455px;width:40px;height:15px;background:#ffffc0;"></div>
<div class="a gc" style="left:615px;top:455px;width:40px;height:15px;background:#ffffc0;"></div>
<div class="a gc" style="left:655px;top:455px;width:40px;height:15px;background:#ffffc0;"></div>
<div class="a gc" style="left:695px;top:455px;width:33px;height:15px;background:#ffffc0;"></div>
<div class="a gc" style="left:728px;top:455px;width:33px;height:15px;background:#ffffc0;"></div>
<div class="a gc" style="left:761px;top:455px;width:40px;height:15px;background:#ffffc0;"></div>
<div class="a gc" style="left:801px;top:455px;width:40px;height:15px;background:#ffffc0;"></div>
<div class="a gc" style="left:841px;top:455px;width:40px;height:15px;background:#ffffc0;"></div>
<div class="a gc" style="left:881px;top:455px;width:53px;height:15px;background:#ffffc0;"></div>
<div class="a gc" style="left:934px;top:455px;width:40px;height:15px;background:#ffffc0;"></div>
<div class="a gc" style="left:974px;top:455px;width:40px;height:15px;background:#ffffc0;"></div>
<div class="a gc" style="left:1014px;top:455px;width:23px;height:15px;background:#ffffc0;"></div>
<div class="a gc" style="left:1037px;top:455px;width:23px;height:15px;background:#ffffc0;"></div>
<div class="a gc" style="left:1060px;top:455px;width:23px;height:15px;background:#ffffc0;"></div>
<div class="a gc" style="left:1083px;top:455px;width:23px;height:15px;background:#ffffc0;"></div>
<div class="a gc" style="left:1106px;top:455px;width:23px;height:15px;background:#ffffc0;"></div>
<div class="a t tl " style="left:436.9px;top:454.6px;">Sunday</div>
<div class="a t tr " style="right:234px;top:454.6px;transform:scaleX(0.875);">0.00</div>
<div class="a t tl " style="left:977.2px;top:454.6px;transform:scaleX(0.875);">0.00</div>
<div class="a gcb" style="left:1017px;top:456px"></div>
<svg class="a" style="left:1017px;top:455px" width="10" height="10"><path d="M0.3 5 L3 8.3 L8.8 2" fill="none" stroke="#800000" stroke-width="1.5"/></svg>
<div class="a gcb" style="left:1040px;top:456px"></div>
<div class="a gcb" style="left:1063px;top:456px"></div>
<div class="a gcb" style="left:1086px;top:456px"></div>
<div class="a gh" style="left:415px;top:470px;width:20px;height:15px;"></div>
<div class="a gc" style="left:435px;top:470px;width:100px;height:15px;background:#c0ffc0;"></div>
<div class="a gc" style="left:535px;top:470px;width:40px;height:15px;background:#ffffc0;"></div>
<div class="a gc" style="left:575px;top:470px;width:40px;height:15px;background:#ffffc0;"></div>
<div class="a gc" style="left:615px;top:470px;width:40px;height:15px;background:#ffffc0;"></div>
<div class="a gc" style="left:655px;top:470px;width:40px;height:15px;background:#ffffc0;"></div>
<div class="a gc" style="left:695px;top:470px;width:33px;height:15px;background:#ffffc0;"></div>
<div class="a gc" style="left:728px;top:470px;width:33px;height:15px;background:#ffffc0;"></div>
<div class="a gc" style="left:761px;top:470px;width:40px;height:15px;background:#ffffc0;"></div>
<div class="a gc" style="left:801px;top:470px;width:40px;height:15px;background:#ffffc0;"></div>
<div class="a gc" style="left:841px;top:470px;width:40px;height:15px;background:#ffffc0;"></div>
<div class="a gc" style="left:881px;top:470px;width:53px;height:15px;background:#ffffc0;"></div>
<div class="a gc" style="left:934px;top:470px;width:40px;height:15px;background:#ffffc0;"></div>
<div class="a gc" style="left:974px;top:470px;width:40px;height:15px;background:#ffffc0;"></div>
<div class="a gc" style="left:1014px;top:470px;width:23px;height:15px;background:#ffffc0;"></div>
<div class="a gc" style="left:1037px;top:470px;width:23px;height:15px;background:#ffffc0;"></div>
<div class="a gc" style="left:1060px;top:470px;width:23px;height:15px;background:#ffffc0;"></div>
<div class="a gc" style="left:1083px;top:470px;width:23px;height:15px;background:#ffffc0;"></div>
<div class="a gc" style="left:1106px;top:470px;width:23px;height:15px;background:#ffffc0;"></div>
<div class="a t tl " style="left:436.9px;top:469.6px;">Bank Holiday</div>
<div class="a t tr " style="right:234px;top:469.6px;transform:scaleX(0.875);">0.00</div>
<div class="a t tl " style="left:977.2px;top:469.6px;transform:scaleX(0.875);">0.00</div>
<div class="a gcb" style="left:1017px;top:471px"></div>
<div class="a gcb" style="left:1040px;top:471px"></div>
<div class="a gcb" style="left:1063px;top:471px"></div>
<div class="a gcb" style="left:1086px;top:471px"></div>
<div class="a ddb" style="left:1042px;top:372px;width:16px;height:16px;"></div>
<svg class="a" style="left:1046px;top:379px" width="8" height="5"><path d="M0 0 H7 L3.5 4 Z" fill="#000"/></svg>
<div class="a " style="left:1038px;top:369px;width:23px;height:22px;border:3px solid #ff2600;box-sizing:border-box;box-shadow:0 2px 4px rgba(0,0,0,.4);"></div>
<div class="a " style="left:561px;top:388px;width:405px;height:110px;background:#fff;border:3px solid #ff2600;box-sizing:border-box;box-shadow:0 3px 4px rgba(0,0,0,.4);"></div>
<div class="a " style="left:564px;top:391px;width:382px;height:13px;background:linear-gradient(#0b7ad6,#0a9bff 45%,#0a9bff);outline:1px dotted #c08040;outline-offset:-1px;"></div>
<div class="a t tc " style="left:566px;width:400px;top:391.0px;color:#fff;transform:scaleX(0.885);">Inner London HCA (12/01/2015 - 12/01/2035)</div>
<div class="a t tc " style="left:566px;width:400px;top:404.0px;transform:scaleX(0.885);">Inner London RGN (12/01/2015 - 12/01/2035)</div>
<div class="a t tc " style="left:566px;width:400px;top:417.0px;transform:scaleX(0.885);">Inner London RMN (12/01/2015 - 12/01/2035)</div>
<div class="a t tc " style="left:566px;width:400px;top:430.0px;transform:scaleX(0.885);">LCC HCA (12/01/2015 - 12/01/2035)</div>
<div class="a t tc " style="left:566px;width:400px;top:443.0px;transform:scaleX(0.885);">Outer London HCA (12/01/2015 - 12/01/2035)</div>
<div class="a t tc " style="left:566px;width:400px;top:456.0px;transform:scaleX(0.885);">Outer London RGN (12/01/2015 - 12/01/2035)</div>
<div class="a t tc " style="left:566px;width:400px;top:469.0px;transform:scaleX(0.885);">Outer London RMN (12/01/2015 - 12/01/2035)</div>
<div class="a t tc " style="left:566px;width:400px;top:482.0px;transform:scaleX(0.885);">PCT HCA (12/01/2015 - 12/01/2035)</div>
<div class="a " style="left:946px;top:391px;width:16px;height:104px;background:#ececec;"></div>
<div class="a ddb" style="left:946px;top:391px;width:16px;height:16px;"></div>
<svg class="a" style="left:950px;top:396px" width="8" height="5"><path d="M0 4 H7 L3.5 0 Z" fill="#000"/></svg>
<div class="a ddb" style="left:946px;top:414px;width:16px;height:42px;"></div>
<div class="a ddb" style="left:946px;top:478px;width:16px;height:17px;"></div>
<svg class="a" style="left:950px;top:485px" width="8" height="5"><path d="M0 0 H7 L3.5 4 Z" fill="#000"/></svg>
<div class="a " style="left:414px;top:579px;width:118px;height:21px;background:#c0ffff;"></div>
<div class="a t tc " style="left:273px;width:400px;top:582.9px;">Create New Pay Rate</div>
<div class="a " style="left:536px;top:579px;width:118px;height:21px;background:#fff;"></div>
<div class="a t tc " style="left:395px;width:400px;top:582.9px;">Edit Pay Default</div>
<div class="a " style="left:666px;top:578px;width:117px;height:21px;background:#ffffc0;"></div>
<div class="a t tc " style="left:524px;width:400px;top:577.4px;">1</div>
<div class="a " style="left:1014px;top:578px;width:142px;height:21px;background:#ff80ff;"></div>
<div class="a t tc " style="left:885px;width:400px;top:582.4px;">Create Future Pay Rate</div>
<svg class="a" style="left:0;top:0;filter:drop-shadow(0 2px 2px rgba(0,0,0,.5));" width="1205" height="615">
<path d="M1059 391.8 L1076.6 400.6 L1071 403 L1078 412 L1070 417 L1064 406 L1059.5 410.6 Z" fill="#ff2600" stroke="#ff2600" stroke-width="1.2" stroke-linejoin="round"/>
<rect x="1068.1" y="411.1" width="113.8" height="65.8" rx="7" ry="7" fill="#fff" stroke="#ff2600" stroke-width="4.2"/>
<path d="M927.3 494 L946 497.5 L940.5 501.5 L952 509 L946 516 L937 506 L933.3 511.5 Z" fill="#ff2600" stroke="#ff2600" stroke-width="1.2" stroke-linejoin="round"/>
<rect x="942.3" y="507.8" width="137.4" height="43.9" rx="6" ry="6" fill="#fff" stroke="#ff2600" stroke-width="4.6"/>
</svg>
<div class="a ct" style="left:1077.5px;top:415.7px">Click the drop</div>
<div class="a ct" style="left:1077.5px;top:433.5px">down arrow to</div>
<div class="a ct" style="left:1077.5px;top:451.3px">load the list</div>
<div class="a ct" style="left:951.8px;top:511.6px">Select a rate from</div>
<div class="a ct" style="left:951.8px;top:529.7px">the list</div>
</body></html>
